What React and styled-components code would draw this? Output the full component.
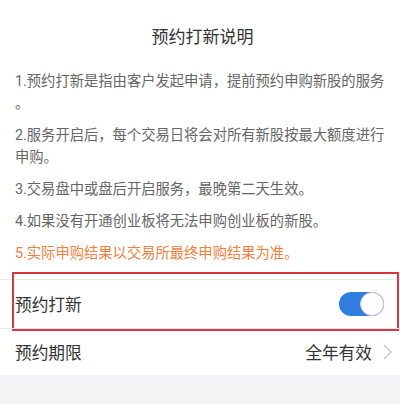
import React from "react";
import styled, { createGlobalStyle } from "styled-components";

const Global = createGlobalStyle`
  html, body { margin: 0; padding: 0; background: #f3f3f5; }
  body { font-family: Roboto, "Noto Sans CJK SC", sans-serif; }
`;

const Page = styled.div`
  width: 400px;
  min-height: 404px;
  background: #f3f3f5;
`;

const Sheet = styled.div`
  background: #ffffff;
`;

const Intro = styled.section`
  padding: 25px 10px 15px 15px;
`;

const Title = styled.h1`
  margin: 0 0 21px;
  font-size: 17px;
  line-height: 24px;
  font-weight: 400;
  color: #333333;
  text-align: center;
`;

const Note = styled.p`
  margin: 0 0 10px;
  font-size: 14.3px;
  line-height: 22px;
  color: ${(p) => (p.$warn ? "#f0813d" : "#666666")};
  white-space: nowrap;
  &:last-child { margin-bottom: 0; }
`;

const Row = styled.div`
  position: relative;
  display: flex;
  align-items: center;
  justify-content: space-between;
  height: ${(p) => p.$h}px;
  padding: 0 ${(p) => p.$pr}px 0 15px;
  border-top: 1px solid #e8e8e8;
`;

const Label = styled.span`
  font-size: 16.7px;
  color: #333333;
`;

const Highlight = styled.div`
  position: absolute;
  top: -8px;
  left: 12px;
  right: 1px;
  bottom: -3px;
  border: 2.5px solid #d9363e;
  pointer-events: none;
`;

const Toggle = styled.div`
  position: relative;
  width: 45px;
  height: 24px;
  border-radius: 12px;
  background: #2f7de1;
`;

const Knob = styled.div`
  position: absolute;
  top: 0;
  right: 0;
  width: 22px;
  height: 22px;
  border-radius: 50%;
  background: #ffffff;
  border: 1px solid #c9ccd2;
`;

const Value = styled.div`
  display: flex;
  align-items: center;
  gap: 11px;
  font-size: 16.7px;
  color: #333333;
`;

const notes = [
  ["1.预约打新是指由客户发起申请，提前预约申购新股的服务", "。"],
  ["2.服务开启后，每个交易日将会对所有新股按最大额度进行", "申购。"],
  ["3.交易盘中或盘后开启服务，最晚第二天生效。"],
  ["4.如果没有开通创业板将无法申购创业板的新股。"],
];

export default function App() {
  return (
    <>
      <Global />
      <Page>
        <Sheet>
          <Intro>
            <Title>预约打新说明</Title>
            {notes.map((lines, i) => (
              <Note key={i}>
                {lines.map((l, j) => (
                  <React.Fragment key={j}>
                    {j > 0 && <br />}
                    {l}
                  </React.Fragment>
                ))}
              </Note>
            ))}
            <Note $warn>5.实际申购结果以交易所最终申购结果为准。</Note>
          </Intro>
          <Row $h={48} $pr={16}>
            <Label>预约打新</Label>
            <Toggle>
              <Knob />
            </Toggle>
            <Highlight />
          </Row>
          <Row $h={46} $pr={8}>
            <Label>预约期限</Label>
            <Value>
              全年有效
              <svg width="9" height="16" viewBox="0 0 9 16">
                <polyline
                  points="1,1 8,8 1,15"
                  fill="none"
                  stroke="#c4c4c8"
                  strokeWidth="1.4"
                />
              </svg>
            </Value>
          </Row>
        </Sheet>
      </Page>
    </>
  );
}
